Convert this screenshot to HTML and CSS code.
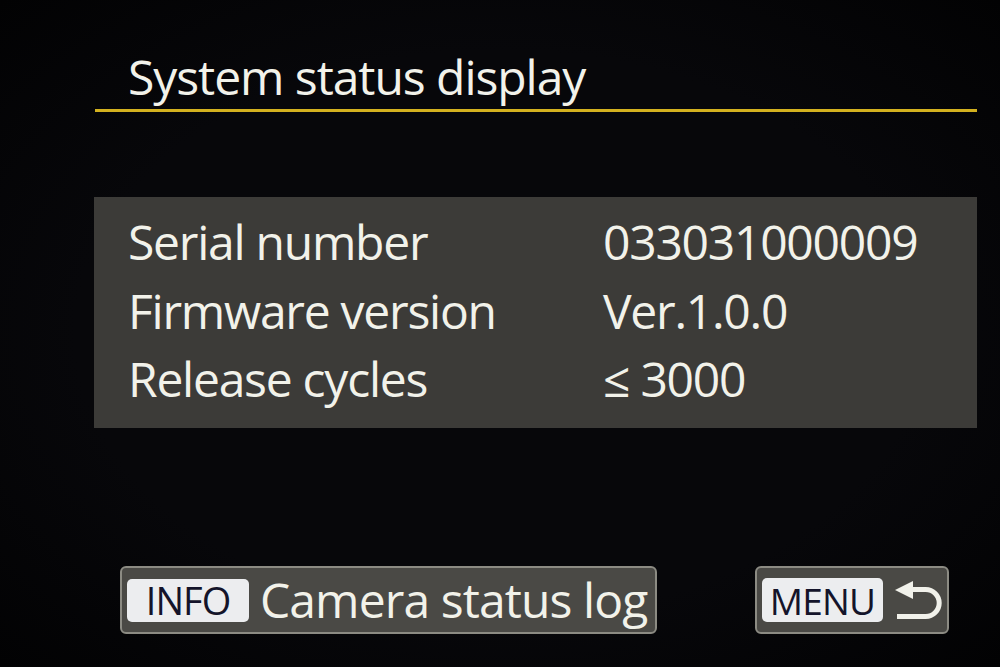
FILE: index.html
```html
<!DOCTYPE html>
<html lang="en">
<head>
  <meta charset="UTF-8">
  <meta name="viewport" content="width=device-width, initial-scale=1.0">
  <title>System status display</title>
  <link rel="stylesheet" href="styles.css">
</head>
<body>
  <div class="screen">
    <!-- Title -->
    <div class="header">
      <h1>System status display</h1>
    </div>

    <!-- Status panel -->
    <div class="panel">
      <div class="row">
        <span class="label">Serial number</span>
        <span class="value">033031000009</span>
      </div>
      <div class="row">
        <span class="label">Firmware version</span>
        <span class="value">Ver.1.0.0</span>
      </div>
      <div class="row">
        <span class="label">Release cycles</span>
        <span class="value">&le; 3000</span>
      </div>
    </div>

    <!-- Bottom buttons -->
    <div class="footer">
      <div class="key-btn info-btn">
        <span class="key">INFO</span>
        <span class="key-text">Camera status log</span>
      </div>
      <div class="key-btn menu-btn">
        <span class="key">MENU</span>
        <svg class="back-icon" width="52" height="44" viewBox="0 0 52 44">
          <polygon points="3,12 21,3 21,21" fill="#f1f1ea"/>
          <path d="M19 11.5 H33.7 A13.5 13.5 0 0 1 33.7 38.5 H5" fill="none" stroke="#f1f1ea" stroke-width="5"/>
        </svg>
      </div>
    </div>
  </div>
</body>
</html>
```

FILE: styles.css
```css
/* General styles */
* {
  margin: 0;
  padding: 0;
  box-sizing: border-box;
}
body {
  width: 1000px;
  height: 667px;
  overflow: hidden;
  background-color: #040406;
  font-family: "Open Sans", "Noto Sans", sans-serif;
  color: #f2f2ea;
  white-space: nowrap;
}
.screen {
  height: 100%;
  background: radial-gradient(ellipse at center, #07070a 60%, #020203 100%);
}

/* Title */
.header {
  margin: 0 23px 0 95px;
  padding: 53px 0 8px 33px;
  border-bottom: 3px solid #d3b11f;
}
.header h1 {
  font-size: 48px;
  font-weight: normal;
  line-height: 48px;
  letter-spacing: -1.05px;
}

/* Status panel */
.panel {
  margin: 85px 23px 0 94px;
  height: 231px;
  padding: 11px 0 0 34px;
  background-color: #3c3b38;
}
.row {
  display: grid;
  grid-template-columns: 475px 1fr;
  font-size: 48px;
  line-height: 68.5px;
  letter-spacing: -1.25px;
}

/* Bottom buttons */
.footer {
  display: flex;
  justify-content: space-between;
  margin: 138px 51px 0 120px;
}
.key-btn {
  display: flex;
  align-items: center;
  height: 68px;
  padding-left: 5px;
  border: 2px solid #8c8b83;
  border-radius: 6px;
  background-color: #4a4945;
}
.info-btn {
  width: 537px;
}
.menu-btn {
  width: 194px;
}
.key {
  display: flex;
  align-items: center;
  justify-content: center;
  width: 122px;
  height: 43px;
  border-radius: 5px;
  background-color: #ecedef;
  color: #14142a;
  font-size: 38px;
  letter-spacing: -1px;
}
.menu-btn .key {
  width: 121px;
  height: 44px;
  font-size: 37px;
  letter-spacing: -0.8px;
}
.key-text {
  margin-left: 11px;
  font-size: 48px;
  line-height: 1;
  letter-spacing: -0.9px;
}
.back-icon {
  margin-left: 9px;
}
```
